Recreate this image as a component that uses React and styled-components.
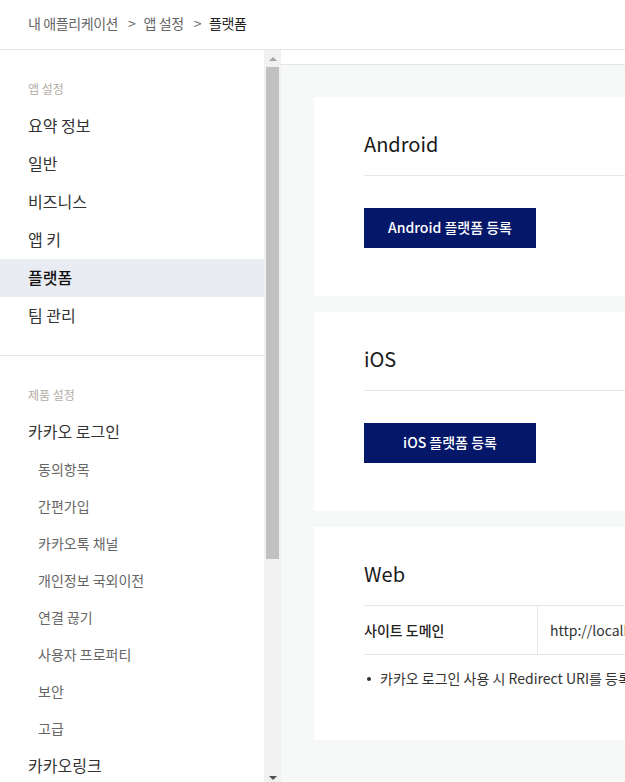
import React from "react";
import styled, { createGlobalStyle } from "styled-components";

const GlobalStyle = createGlobalStyle`
  html, body {
    margin: 0;
    padding: 0;
    height: 100%;
    overflow: hidden;
  }
  body {
    font-family: "Noto Sans CJK KR", "Noto Sans", sans-serif;
    color: #333;
    background: #fff;
  }
  * { box-sizing: border-box; }
`;

const appMenu = ["요약 정보", "일반", "비즈니스", "앱 키", "플랫폼", "팀 관리"];
const loginMenu = [
  "동의항목",
  "간편가입",
  "카카오톡 채널",
  "개인정보 국외이전",
  "연결 끊기",
  "사용자 프로퍼티",
  "보안",
  "고급",
];

const platforms = [
  { name: "Android", button: "Android 플랫폼 등록" },
  { name: "iOS", button: "iOS 플랫폼 등록" },
];

export default function App() {
  return (
    <Page>
      <GlobalStyle />
      <Header>
        <Crumb>내 애플리케이션</Crumb>
        <Sep>&gt;</Sep>
        <Crumb>앱 설정</Crumb>
        <Sep>&gt;</Sep>
        <Crumb current>플랫폼</Crumb>
      </Header>
      <Body>
        <Sidebar>
          <Section>
            <SectionLabel>앱 설정</SectionLabel>
            {appMenu.map((m) => (
              <MenuItem key={m} active={m === "플랫폼"}>
                {m}
              </MenuItem>
            ))}
          </Section>
          <Section bordered>
            <SectionLabel>제품 설정</SectionLabel>
            <MenuItem>카카오 로그인</MenuItem>
            {loginMenu.map((m) => (
              <SubItem key={m}>{m}</SubItem>
            ))}
            <MenuItem>카카오링크</MenuItem>
          </Section>
        </Sidebar>
        <ScrollBar>
          <ScrollButton>
            <Arrow up />
          </ScrollButton>
          <Track>
            <Thumb />
          </Track>
          <ScrollButton>
            <Arrow />
          </ScrollButton>
        </ScrollBar>
        <Main>
          <TopStrip />
          <Content>
            {platforms.map((p) => (
              <Card key={p.name}>
                <CardTitle lined>{p.name}</CardTitle>
                <PrimaryButton>{p.button}</PrimaryButton>
              </Card>
            ))}
            <Card web>
              <CardTitle>Web</CardTitle>
              <Table>
                <Row>
                  <HeadCell>사이트 도메인</HeadCell>
                  <Cell>http://localhost:3000</Cell>
                </Row>
              </Table>
              <Notes>
                <Note>카카오 로그인 사용 시 Redirect URI를 등록해야 합니다.</Note>
              </Notes>
            </Card>
          </Content>
        </Main>
      </Body>
    </Page>
  );
}

const Page = styled.div`
  height: 100vh;
  display: flex;
  flex-direction: column;
`;

const Header = styled.header`
  height: 50px;
  flex-shrink: 0;
  display: flex;
  align-items: center;
  padding: 0 0 3px 28px;
  border-bottom: 1px solid #e6e6e6;
  font-size: 14px;
  letter-spacing: -0.4px;
`;

const Crumb = styled.span`
  color: ${(p) => (p.current ? "#222" : "#666")};
`;

const Sep = styled.span`
  color: #666;
  margin: 0 8px 0 10px;
`;

const Body = styled.div`
  flex: 1;
  display: flex;
  min-height: 0;
`;

const Sidebar = styled.nav`
  width: 264px;
  flex-shrink: 0;
  overflow: hidden;
`;

const Section = styled.div`
  padding: 30px 0 20px;
  border-top: ${(p) => (p.bordered ? "1px solid #e6e6e6" : "none")};
`;

const SectionLabel = styled.div`
  font-size: 12px;
  line-height: 18px;
  color: #b3aca5;
  padding-left: 28px;
  margin-bottom: 9px;
`;

const MenuItem = styled.div`
  height: 38px;
  display: flex;
  align-items: center;
  padding: 0 0 3px 28px;
  font-size: 16px;
  color: ${(p) => (p.active ? "#111" : "#333")};
  font-weight: ${(p) => (p.active ? 500 : 400)};
  background: ${(p) => (p.active ? "#e9ecf3" : "transparent")};
`;

const SubItem = styled.div`
  height: 37px;
  display: flex;
  align-items: center;
  padding: 0 0 2px 38px;
  font-size: 14px;
  color: #666;
`;

const ScrollBar = styled.div`
  width: 17px;
  flex-shrink: 0;
  background: #f1f1f1;
  display: flex;
  flex-direction: column;
`;

const ScrollButton = styled.div`
  height: 17px;
  display: flex;
  align-items: center;
  justify-content: center;
`;

const Arrow = styled.span`
  width: 0;
  height: 0;
  border-left: 4px solid transparent;
  border-right: 4px solid transparent;
  ${(p) =>
    p.up
      ? "border-bottom: 4px solid #a3a3a3;"
      : "border-top: 4px solid #505050; margin-top: 8px;"}
`;

const Track = styled.div`
  flex: 1;
  padding: 0 2px;
`;

const Thumb = styled.div`
  height: 492px;
  background: #c1c1c1;
`;

const Main = styled.main`
  flex: 1;
  min-width: 0;
  overflow: hidden;
  background: #f7f8f8;
  display: flex;
  flex-direction: column;
`;

const TopStrip = styled.div`
  height: 15px;
  flex-shrink: 0;
  background: #fff;
  border-bottom: 1px solid #e6e6e6;
`;

const Content = styled.div`
  padding: 32px 0 0 33px;
  display: flex;
  flex-direction: column;
  gap: 16px;
`;

const Card = styled.section`
  width: 760px;
  background: #fff;
  padding: 32px 50px ${(p) => (p.web ? "52px" : "48px")};
`;

const CardTitle = styled.h3`
  margin: 0;
  font-size: 20px;
  line-height: 30px;
  font-weight: 400;
  color: #1a1a1a;
  padding-bottom: 16px;
  border-bottom: ${(p) => (p.lined ? "1px solid #e6e6e6" : "none")};
`;

const PrimaryButton = styled.button`
  margin-top: 32px;
  width: 172px;
  height: 40px;
  padding: 0 0 2px;
  border: none;
  background: #051769;
  color: #fff;
  font-family: "Noto Sans CJK KR", "Noto Sans", sans-serif;
  font-size: 14px;
  font-weight: 500;
  display: block;
`;

const Table = styled.div`
  border-top: 1px solid #e6e6e6;
  border-bottom: 1px solid #e6e6e6;
`;

const Row = styled.div`
  display: flex;
  height: 48px;
`;

const HeadCell = styled.div`
  width: 174px;
  flex-shrink: 0;
  display: flex;
  align-items: center;
  font-size: 14px;
  font-weight: 500;
  color: #222;
  border-right: 1px solid #e6e6e6;
`;

const Cell = styled.div`
  display: flex;
  align-items: center;
  padding-left: 12px;
  font-size: 14px;
  color: #333;
  white-space: nowrap;
`;

const Notes = styled.ul`
  margin: 13px 0 0;
  padding: 0;
  list-style: none;
`;

const Note = styled.li`
  position: relative;
  padding-left: 16px;
  font-size: 14px;
  line-height: 20px;
  color: #333;
  white-space: nowrap;
  &::before {
    content: "";
    position: absolute;
    left: 3px;
    top: 9px;
    width: 4px;
    height: 4px;
    border-radius: 50%;
    background: #333;
  }
`;
